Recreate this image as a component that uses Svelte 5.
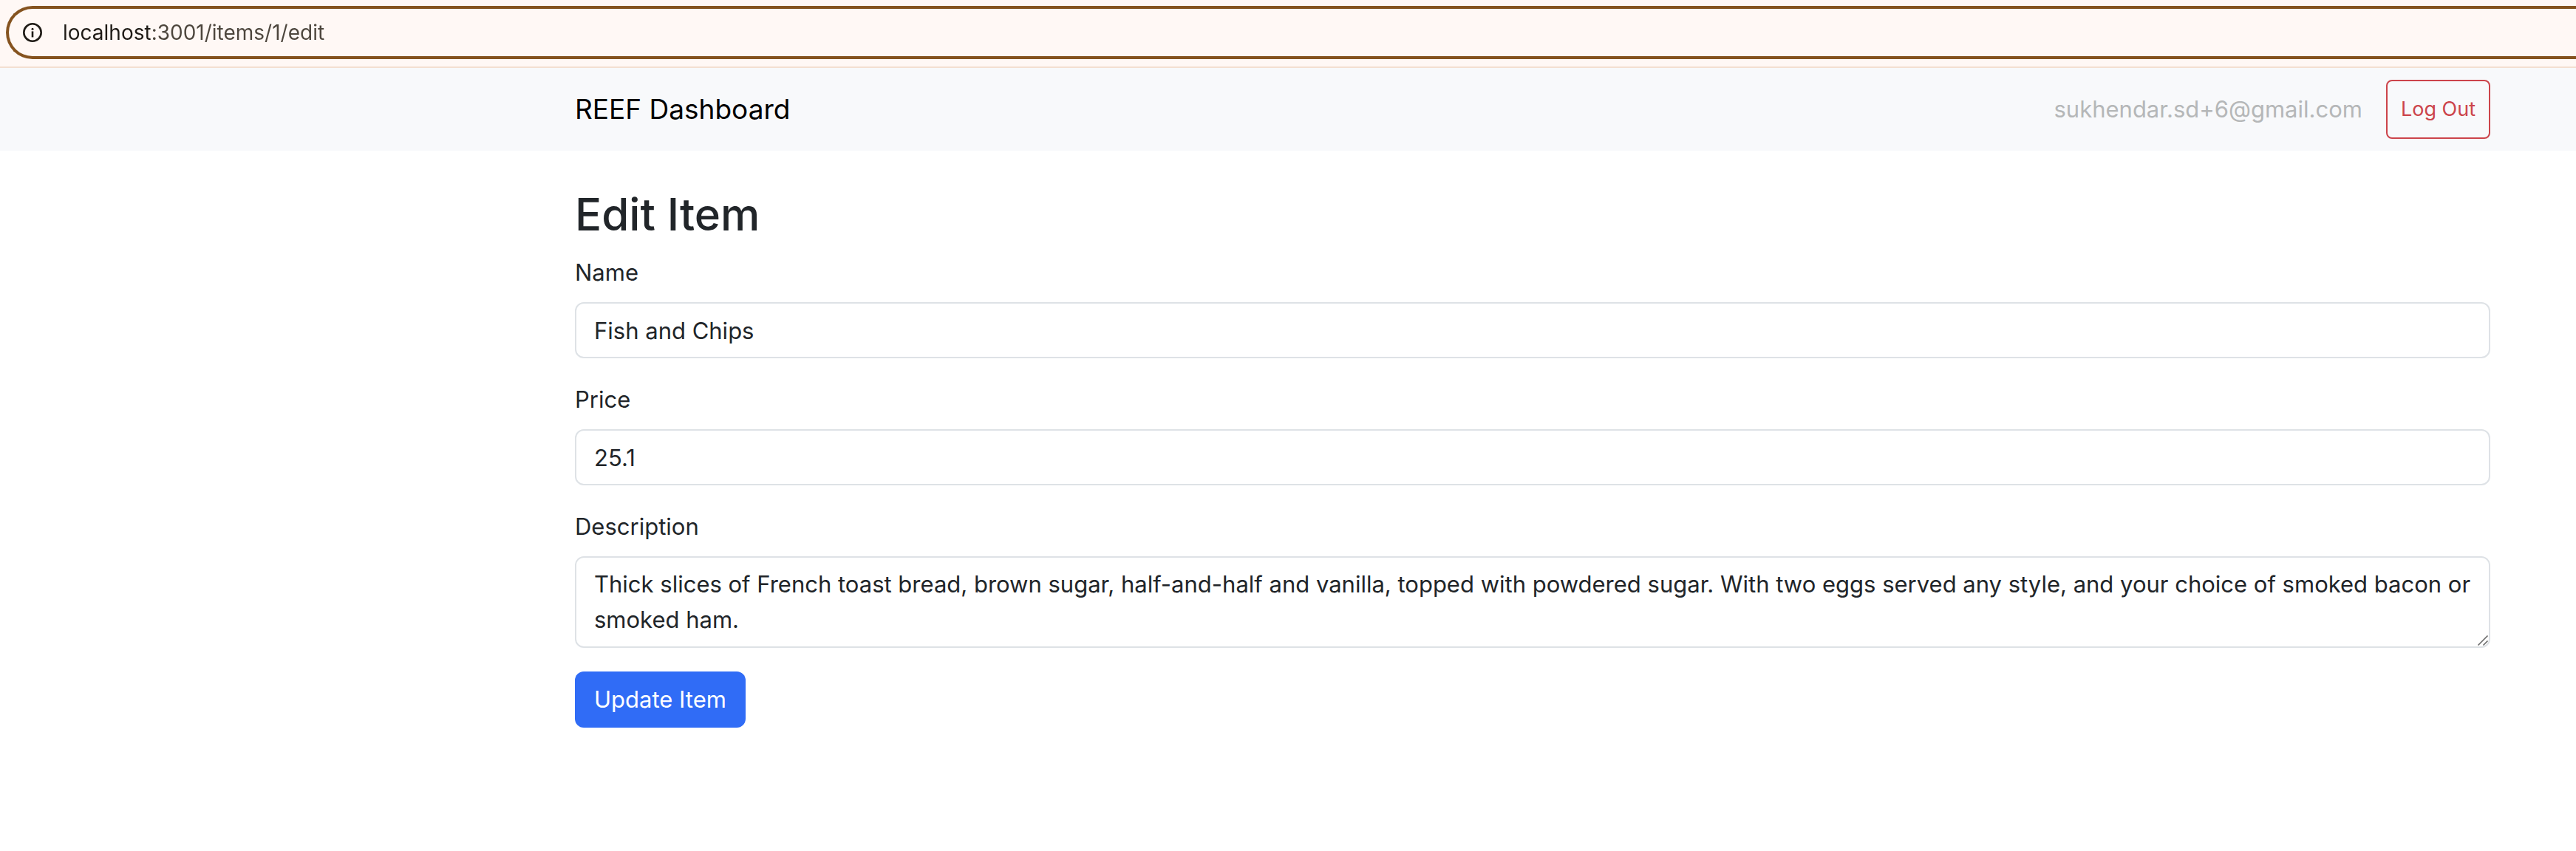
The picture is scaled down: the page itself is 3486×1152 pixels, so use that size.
<script>
  let url = $state('localhost:3001/items/1/edit');
  let item = $state({
    name: 'Fish and Chips',
    price: '25.1',
    description:
      'Thick slices of French toast bread, brown sugar, half-and-half and vanilla, topped with powdered sugar. With two eggs served any style, and your choice of smoked bacon or smoked ham.'
  });
</script>

<div class="toolbar">
  <div class="omnibox">
    <svg class="info" viewBox="0 0 26 26" aria-hidden="true">
      <circle cx="13" cy="13" r="11.7" fill="none" stroke="currentColor" stroke-width="2.6" />
      <circle cx="13" cy="8.2" r="1.5" fill="currentColor" />
      <rect x="11.7" y="11.4" width="2.6" height="8" fill="currentColor" />
    </svg>
    <input class="url" aria-label="Address" spellcheck="false" bind:value={url} />
  </div>
</div>

<nav class="navbar">
  <a class="brand" href="/">REEF Dashboard</a>
  <div class="account">
    <span class="email">sukhendar.sd+6@gmail.com</span>
    <button class="logout" type="button">Log Out</button>
  </div>
</nav>

<main>
  <h1>Edit Item</h1>
  <form onsubmit={(e) => e.preventDefault()}>
    <div class="field">
      <label for="name">Name</label>
      <input class="control" id="name" bind:value={item.name} />
    </div>
    <div class="field">
      <label for="price">Price</label>
      <input class="control" id="price" bind:value={item.price} />
    </div>
    <div class="field">
      <label for="description">Description</label>
      <div class="area">
        <textarea class="control" id="description" rows="2" spellcheck="false" bind:value={item.description}></textarea>
        <svg class="grip" viewBox="0 0 16 16" aria-hidden="true">
          <path d="M1.5 14.5 14.5 1.5M8.5 14.5l6-6" fill="none" stroke="#6b6b6b" stroke-width="1.6" />
        </svg>
      </div>
    </div>
    <button class="submit" type="submit">Update Item</button>
  </form>
</main>

<style>
  :global(body) {
    margin: 0;
    background: #fff;
    color: #212529;
    font-family: Inter, 'Liberation Sans', sans-serif;
    font-size: 31px;
    line-height: 48px;
  }

  .toolbar {
    padding: 8px 0 10px 8px;
    background: #fff8f5;
    border-bottom: 2px solid #f3dfd1;
    overflow: hidden;
  }

  .omnibox {
    box-sizing: border-box;
    display: flex;
    align-items: center;
    gap: 28px;
    height: 72px;
    padding-left: 19px;
    border: 4px solid #85531f;
    border-right: 0;
    border-radius: 36px 0 0 36px;
    color: #1f1b16;
  }

  .info {
    flex: none;
    width: 26px;
    height: 26px;
  }

  .url {
    flex: 1;
    min-width: 0;
    padding: 0;
    border: 0;
    outline: 0;
    font: inherit;
    font-size: 28px;
    line-height: 40px;
    /* host name dark, the rest of the address muted */
    color: transparent;
    caret-color: #1f1b16;
    background: linear-gradient(90deg, #1f1b16 118px, #4d463d 118px);
    background-clip: text;
  }

  .navbar {
    display: flex;
    align-items: center;
    justify-content: space-between;
    padding: 16px 116px 16px 778px;
    background: #f8f9fb;
  }

  .brand {
    color: #000;
    font-size: 37px;
    line-height: 60px;
    text-decoration: none;
  }

  .account {
    display: flex;
    align-items: center;
    gap: 32px;
  }

  .email {
    color: #b5b7b8;
  }

  .logout {
    padding: 17px 18px;
    border: 2px solid #cc444b;
    border-radius: 8px;
    background: transparent;
    color: #cc444b;
    font: inherit;
    font-size: 27px;
    line-height: 42px;
  }

  main {
    padding: 48px 116px 48px 778px;
  }

  h1 {
    margin: 0 0 16px;
    font-size: 60px;
    font-weight: 500;
    line-height: 77px;
  }

  .field {
    margin-bottom: 32px;
  }

  label {
    display: block;
    margin-bottom: 16px;
  }

  .control {
    box-sizing: border-box;
    display: block;
    width: 100%;
    padding: 12px 24px;
    border: 2px solid #dee2e6;
    border-radius: 12px;
    background: #fff;
    color: inherit;
    font: inherit;
  }

  input.control {
    height: 76px;
  }

  .area {
    position: relative;
  }

  textarea {
    resize: vertical;
  }

  textarea::-webkit-resizer {
    background: transparent;
  }

  .grip {
    position: absolute;
    right: 2px;
    bottom: 2px;
    width: 16px;
    height: 16px;
    pointer-events: none;
  }

  .submit {
    padding: 14px 26px;
    border: 0;
    border-radius: 12px;
    background: #306cf6;
    color: #fff;
    font: inherit;
  }
</style>
